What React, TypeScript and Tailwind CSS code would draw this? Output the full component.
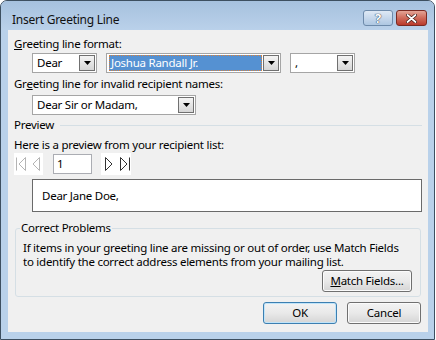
import React from "react";

function Combo({ className, text, selected }: { className: string; text: string; selected?: boolean }) {
  return (
    <div className={`flex h-[20px] items-stretch border border-[#a5a5a5] bg-white p-px ${className}`}>
      <div className="flex flex-1 items-center pl-[1px]">
        {selected ? (
          <div className="flex h-full flex-1 items-center border border-dotted border-[#d9823b] bg-[#5591d2] pl-[1px] text-white">
            {text}
          </div>
        ) : (
          <span className="pl-[2px]">{text}</span>
        )}
      </div>
      <div className="ml-[1px] flex w-[16px] items-center justify-center border border-[#707070] bg-linear-to-b from-[#f4f4f4] to-[#d6d6d6]">
        <svg width="7" height="4" viewBox="0 0 7 4">
          <polygon points="0,0 7,0 3.5,4" fill="#000" />
        </svg>
      </div>
    </div>
  );
}

function Btn({ className, children, primary }: { className: string; children: React.ReactNode; primary?: boolean }) {
  return (
    <div
      className={`flex h-[22px] items-center justify-center rounded-[3px] border bg-linear-to-b from-[#f3f3f3] via-[#e9e9e9] to-[#d5d5d5] ${
        primary ? "border-[#3c7fb1] shadow-[inset_0_0_0_1px_#c0e4f9]" : "border-[#707070] shadow-[inset_0_0_0_1px_#fbfbfb]"
      } ${className}`}
    >
      {children}
    </div>
  );
}

export default function App() {
  return (
    <div className="h-[340px] w-[436px] bg-white font-['Noto_Sans',sans-serif] text-[11.5px] leading-[16px] tracking-[-0.25px] text-black">
      <div className="flex h-[340px] w-[435px] flex-col overflow-hidden rounded-t-[7px] border border-[#3d4f60] bg-[#b9d1ea]">
        {/* title bar */}
        <div className="flex h-[29px] items-start bg-linear-to-b from-[#a6c1de] to-[#bad1ea] pl-[11px] pr-[7px] pt-[9px]">
          <span className="mt-[2px] flex-1 text-[12px] text-[#111]">Insert Greeting Line</span>
          <div className="flex gap-[3px]">
            <div className="flex h-[16px] w-[30px] items-center justify-center rounded-[3px] border border-[#6d8aaa] bg-linear-to-b from-[#dfe9f5] to-[#aec7e2] text-[13px] font-bold leading-none text-white [text-shadow:0_0_1px_#1d2f44,0_0_1px_#1d2f44]">
              ?
            </div>
            <div className="flex h-[16px] w-[31px] items-center justify-center rounded-[3px] border border-[#7a2a22] bg-linear-to-b from-[#e3a496] via-[#cf6a5a] to-[#b9392b]">
              <svg width="11" height="9" viewBox="0 0 11 9">
                <path d="M1.5 1 L9.5 8 M9.5 1 L1.5 8" stroke="#3a1510" strokeWidth="3.2" strokeLinecap="round" />
                <path d="M1.5 1 L9.5 8 M9.5 1 L1.5 8" stroke="#fff" strokeWidth="1.8" strokeLinecap="round" />
              </svg>
            </div>
          </div>
        </div>

        {/* client */}
        <div className="pb-[7px] pl-[7px] pr-[6px]">
          <div className="flex h-[302px] flex-col bg-[#f0f0f0] px-[6px] pt-[6px]">
            <div className="h-[16px]">
              <u>G</u>reeting line format:
            </div>
            <div className="mt-[1px] flex gap-[9px] pl-[18px]">
              <Combo className="w-[65px]" text="Dear" />
              <Combo className="w-[175px]" text="Joshua Randall Jr." selected />
              <Combo className="w-[65px]" text="," />
            </div>
            <div className="mt-[3px] h-[16px]">
              Gr<u>e</u>eting line for invalid recipient names:
            </div>
            <div className="mt-[3px] pl-[18px]">
              <Combo className="w-[164px]" text="Dear Sir or Madam," />
            </div>

            <div className="mt-[2px] flex h-[16px] items-center gap-[6px]">
              <span>Preview</span>
              <div className="h-px flex-1 bg-[#d5dfe5]" />
            </div>
            <div className="mt-[4px] h-[16px]">Here is a preview from your recipient list:</div>
            <div className="flex h-[22px] items-center">
              <div className="flex h-[22px] w-[29px] items-center gap-[6px] bg-white pl-[2px]">
                <svg width="10" height="14" viewBox="0 0 10 14">
                  <path d="M0.5 0.5 V13.5 M9.5 0.5 L3 7 L9.5 13.5 Z" stroke="#b4b4b4" fill="none" />
                </svg>
                <svg width="8" height="14" viewBox="0 0 8 14">
                  <path d="M7.5 0.5 L1 7 L7.5 13.5 Z" stroke="#b4b4b4" fill="none" />
                </svg>
              </div>
              <div className="ml-[10px] flex h-[20px] w-[39px] items-center border border-[#abadb3] bg-white pl-[3px]">1</div>
              <div className="ml-[9px] flex h-[22px] w-[30px] items-center gap-[7px] bg-white pl-[4px]">
                <svg width="8" height="14" viewBox="0 0 8 14">
                  <path d="M0.5 0.5 L7 7 L0.5 13.5 Z" stroke="#333" fill="none" />
                </svg>
                <svg width="10" height="14" viewBox="0 0 10 14">
                  <path d="M0.5 0.5 L7 7 L0.5 13.5 Z M9.5 0.5 V13.5" stroke="#333" fill="none" />
                </svg>
              </div>
            </div>
            <div className="ml-[18px] mt-[4px] flex h-[33px] items-center border border-[#6a6a6a] bg-white pl-[9px]">
              Dear Jane Doe,
            </div>

            <fieldset className="mx-[1px] mt-[8px] rounded-[3px] border border-[#d5dfe5] pb-[4px]">
              <legend className="ml-[4px] px-[1px]">Correct Problems</legend>
              <div className="mt-[5px] px-[7px] leading-[14px]">
                <div>If items in your greeting line are missing or out of order, use Match Fields</div>
                <div>to identify the correct address elements from your mailing list.</div>
              </div>
              <div className="mt-[1px] flex justify-end pr-[8px]">
                <Btn className="w-[90px]">
                  <span>
                    <u>M</u>atch Fields...
                  </span>
                </Btn>
              </div>
            </fieldset>

            <div className="mt-[5px] flex justify-end gap-[10px] pr-[1px]">
              <Btn className="w-[74px]" primary>
                OK
              </Btn>
              <Btn className="w-[74px]">Cancel</Btn>
            </div>
          </div>
        </div>
      </div>
    </div>
  );
}
